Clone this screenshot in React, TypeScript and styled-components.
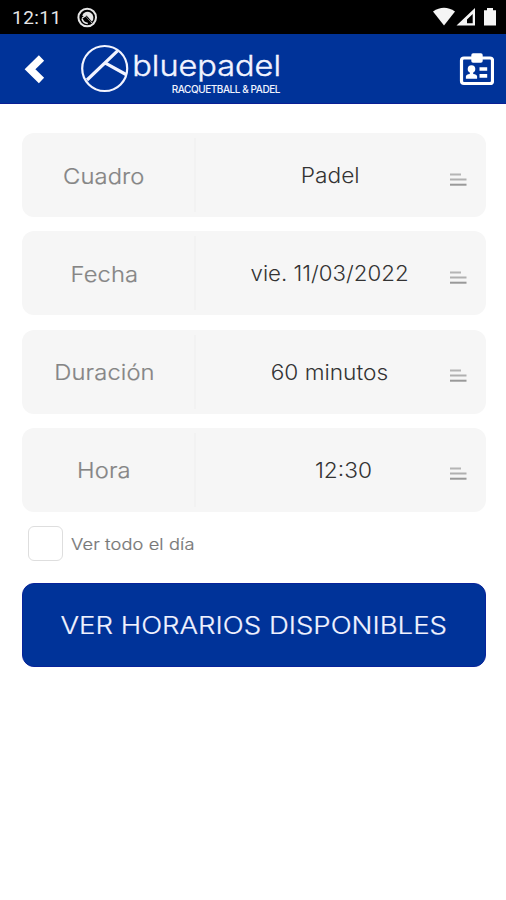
import React from 'react';
import styled, { createGlobalStyle } from 'styled-components';

const GlobalStyle = createGlobalStyle`
  * { box-sizing: border-box; }
  body { margin: 0; background: #fff; font-family: Inter, 'Open Sans', sans-serif; }
`;

const Screen = styled.div`
  width: 506px;
  height: 900px;
  overflow: hidden;
  background: #fff;
`;

const StatusBar = styled.div`
  display: flex;
  align-items: center;
  height: 34px;
  padding: 0 9px 0 12px;
  background: #000;
  color: #e6e6e6;
`;

const Clock = styled.span`
  width: 65px;
  font: 400 19px/34px Roboto, sans-serif;
  letter-spacing: 0.45px;
  padding-top: 2px;
`;

const StatusIcons = styled.svg`
  margin-left: auto;
`;

const Header = styled.header`
  display: flex;
  align-items: center;
  height: 70px;
  padding: 0 12px 0 24px;
  background: #003399;
  border-bottom: 1px solid #0a1f94;
`;

const BackButton = styled.button`
  display: flex;
  padding: 0;
  border: 0;
  background: none;
  width: 56px;
`;

const Brand = styled.div`
  display: flex;
  align-items: flex-start;
  height: 50px;
  color: #f2f4ff;
`;

const BrandWords = styled.div`
  display: flex;
  flex-direction: column;
  width: 150px;
`;

const BrandName = styled.span`
  height: 39px;
  padding-left: 2px;
  font: 300 29px/43px Inter, sans-serif;
  white-space: nowrap;
  -webkit-text-stroke: 0.4px #f2f4ff;
  transform: scaleX(1.12);
  transform-origin: left;
`;

const BrandTag = styled.span`
  align-self: flex-end;
  font: 500 10px/12px Inter, sans-serif;
  letter-spacing: -0.44px;
  white-space: nowrap;
`;

const BadgeButton = styled(BackButton)`
  width: auto;
  margin-left: auto;
`;

const Form = styled.main`
  padding: 29px 20px 0 22px;
`;

const Fields = styled.div`
  display: grid;
  gap: 14.3px;
`;

const Field = styled.div`
  display: flex;
  align-items: center;
  height: 84px;
  border-radius: 12px;
  background: #f6f6f6;
`;

const Wide = styled.span<{ $scale: number }>`
  display: inline-block;
  transform: scaleX(${(p) => p.$scale});
`;

const Label = styled.div`
  display: flex;
  align-items: center;
  justify-content: center;
  width: 174px;
  height: 74px;
  padding: 1px 8px 0 0;
  border-right: 2px solid #f2f2f2;
  color: #858585;
  font-size: 22px;
  font-weight: 300;
  letter-spacing: 0.1px;
  -webkit-text-stroke: 0.2px #858585;
`;

const Value = styled.div<{ $shift: number }>`
  flex: 1;
  padding: 1px 0 0 ${(p) => p.$shift}px;
  text-align: center;
  color: #333;
  font-size: 21px;
  font-weight: 300;
  white-space: nowrap;
`;

const PickerIcon = styled.svg`
  flex: none;
  margin: 9px 19px 0 0;
`;

const AllDay = styled.label`
  display: flex;
  align-items: center;
  gap: 8px;
  height: 35px;
  margin: 14px 0 0 6px;
  color: #777;
  font-size: 16px;
  font-weight: 300;
  letter-spacing: 0.1px;
  -webkit-text-stroke: 0.2px #777;

  ${Wide} {
    padding-top: 2px;
    transform-origin: left;
  }
`;

const Checkbox = styled.input`
  appearance: none;
  width: 35px;
  height: 35px;
  margin: 0;
  border: 1.5px solid #dedede;
  border-radius: 6px;
  background: #fff;
`;

const Submit = styled.button`
  display: block;
  width: 464px;
  height: 84px;
  margin-top: 22px;
  padding: 0;
  border: 1px solid #08239a;
  border-radius: 12px;
  background: #003399;
  color: #f0f2ff;
  font: 300 24.5px/83px Inter, sans-serif;
  white-space: nowrap;
  -webkit-text-stroke: 0.2px #f0f2ff;
`;

const fields = [
  { label: 'Cuadro', value: 'Padel', scale: 1.08, shift: 15 },
  { label: 'Fecha', value: 'vie. 11/03/2022', scale: 1.06, shift: 14 },
  { label: 'Duración', value: '60 minutos', scale: 1.08, shift: 13 },
  { label: 'Hora', value: '12:30', scale: 1.08, shift: 42 },
];

export default function App() {
  return (
    <Screen>
      <GlobalStyle />
      <StatusBar>
        <Clock>12:11</Clock>
        <svg width="21" height="21" viewBox="0 0 21 21" fill="none" stroke="#e6e6e6">
          <circle cx="10.2" cy="10.5" r="8.8" strokeWidth="2" />
          <path d="M5.2 8.5A5.8 5.8 0 1 1 14.8 14.6L9.6 8.2 6.8 9.6Z" fill="#e6e6e6" stroke="none" />
          <path d="m5.2 11 3.6-2.4 6.2 7" strokeWidth="1.3" />
          <path d="m7.8 11 1.8-1.6 5 5.6" stroke="#000" strokeWidth="1" />
          <path d="M5 11.5c.7 3 2.5 4.8 5.8 5" strokeWidth="1.5" />
        </svg>
        <StatusIcons width="64" height="20" viewBox="433 8 64 20" fill="#f5f5f5">
          <path d="M433 12.5q11-7.5 22 0L444 26.5Z" />
          <path fillRule="evenodd" d="M456.5 26.5 475 9v17.5ZM467 24.2h5.7v-9.3l-5.7 5.5Z" />
          <path d="M484 11.2h3V9h6v2.2h3v15.3h-12Z" />
        </StatusIcons>
      </StatusBar>
      <Header>
        <BackButton aria-label="Volver">
          <svg width="22" height="30" viewBox="0 0 22 30">
            <path d="M17.5 4 6 15.3 17.5 26.5" fill="none" stroke="#fff" strokeWidth="7.5" />
          </svg>
        </BackButton>
        <Brand>
          <svg width="50" height="50" viewBox="0 0 50 50" fill="none" stroke="#f2f4ff">
            <circle cx="24.7" cy="24.5" r="22.5" strokeWidth="2.2" />
            <path d="M7 36 37.5 6.8M25 18.8 46 30.5" strokeWidth="3.2" />
          </svg>
          <BrandWords>
            <BrandName>bluepadel</BrandName>
            <BrandTag>RACQUETBALL &amp; PADEL</BrandTag>
          </BrandWords>
        </Brand>
        <BadgeButton aria-label="Carnet">
          <svg width="35" height="34" viewBox="459 52 35 34" fill="#fff">
            <rect x="461.5" y="58" width="31" height="25.5" rx="2.5" fill="none" stroke="#fff" strokeWidth="3.2" />
            <rect x="471.3" y="53.3" width="11.4" height="9.4" rx="1.8" />
            <circle cx="471.5" cy="69" r="3.8" />
            <path d="M469.8 71h3.4v3q3.6.6 3.9 2.2v2.5h-11.2v-2.5q.3-1.6 3.9-2.2Z" />
            <path d="M479.5 67.3h7.7v3.5h-7.7ZM479.5 74h7.7v3.8h-7.7Z" />
          </svg>
        </BadgeButton>
      </Header>
      <Form>
        <Fields>
          {fields.map((f) => (
            <Field key={f.label}>
              <Label><Wide $scale={1.08}>{f.label}</Wide></Label>
              <Value $shift={f.shift}><Wide $scale={f.scale}>{f.value}</Wide></Value>
              <PickerIcon width="18" height="14" viewBox="0 0 18 14">
                <path d="M1 1.5h11" stroke="#b5b5b5" strokeWidth="2" />
                <path d="M1 6.5h16.5" stroke="#b0b0b0" strokeWidth="2" />
                <path d="M1 11.7h16.5" stroke="#999" strokeWidth="2" />
              </PickerIcon>
            </Field>
          ))}
        </Fields>
        <AllDay>
          <Checkbox type="checkbox" />
          <Wide $scale={1.14}>Ver todo el día</Wide>
        </AllDay>
        <Submit><Wide $scale={1.125}>VER HORARIOS DISPONIBLES</Wide></Submit>
      </Form>
    </Screen>
  );
}
